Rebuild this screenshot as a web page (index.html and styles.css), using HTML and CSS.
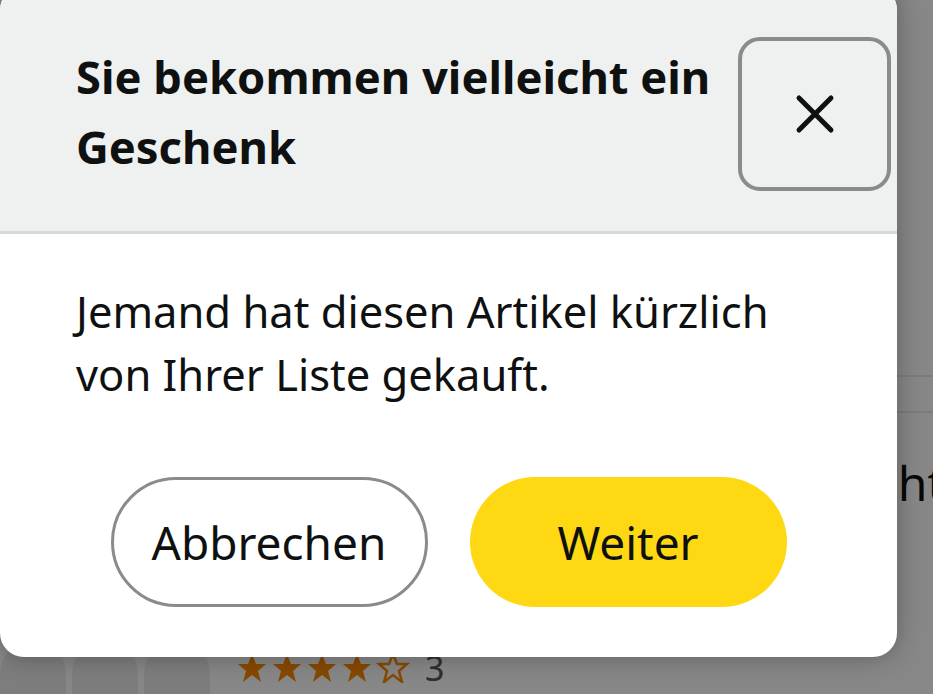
FILE: index.html
```html
<!DOCTYPE html>
<html lang="de">
<head>
    <meta charset="UTF-8">
    <meta name="viewport" content="width=device-width, initial-scale=1.0">
    <title>Geschenk Hinweis</title>
    <link rel="stylesheet" href="styles.css">
</head>
<body>
    <div class="page">
        <div class="page-top"></div>
        <div class="tabs"></div>
        <div class="product">
            <div class="product-image">
                <div class="bottle"></div>
                <div class="bottle"></div>
                <div class="bottle"></div>
            </div>
            <div class="product-info">
                <div class="product-title">Geschenkset Tee für Weihnachten Damen</div>
                <div class="product-title">und Herren mit Tasse ...</div>
                <div class="rating">
                    <svg class="stars" width="174" height="30" viewBox="0 0 174 30">
                        <defs>
                            <path id="star" d="M15 1 L19 11 L29 11 L21 18 L24 29 L15 22 L6 29 L9 18 L1 11 L11 11 Z"/>
                        </defs>
                        <use href="#star" x="0" fill="#ff8a00"/>
                        <use href="#star" x="35" fill="#ff8a00"/>
                        <use href="#star" x="70" fill="#ff8a00"/>
                        <use href="#star" x="105" fill="#ff8a00"/>
                        <use href="#star" x="141" fill="none" stroke="#ff8a00" stroke-width="2.5"/>
                    </svg>
                    <span class="count">3</span>
                </div>
            </div>
        </div>
    </div>

    <div class="backdrop"></div>

    <div class="modal" role="dialog">
        <div class="modal-header">
            <h2 class="modal-title">Sie bekommen vielleicht ein Geschenk</h2>
            <button class="close-btn" aria-label="Schließen">
                <svg width="40" height="40" viewBox="0 0 40 40">
                    <path d="M4 4 L36 36 M36 4 L4 36" stroke="#0f1111" stroke-width="5" stroke-linecap="round" fill="none"/>
                </svg>
            </button>
        </div>
        <div class="modal-body">
            <p class="modal-text">Jemand hat diesen Artikel kürzlich von Ihrer Liste gekauft.</p>
            <div class="actions">
                <button class="btn btn-cancel">Abbrechen</button>
                <button class="btn btn-primary">Weiter</button>
            </div>
        </div>
    </div>
</body>
</html>
```

FILE: styles.css
```css
* {
    box-sizing: border-box;
}

body {
    margin: 0;
    width: 933px;
    height: 694px;
    overflow: hidden;
    position: relative;
    font-family: "Noto Sans", "Open Sans", sans-serif;
    color: #0f1111;
    background: #fff;
}

/* page behind the dialog */
.page {
    height: 694px;
    overflow: hidden;
}

.page-top {
    height: 375px;
}

.tabs {
    height: 38px;
    border-top: 2px solid #eaeaea;
    border-bottom: 2px solid #eaeaea;
}

.product {
    display: flex;
    gap: 27px;
}

.product-image {
    width: 210px;
    height: 300px;
    display: flex;
    gap: 6px;
    padding-top: 230px;
}

.bottle {
    flex: 1;
    background: #ececec;
    border-radius: 30px 30px 0 0;
}

.product-info {
    padding-top: 36px;
    flex: 1;
    min-width: 0;
}

.product-title {
    font-size: 48px;
    line-height: 68px;
    white-space: nowrap;
}

.rating {
    display: flex;
    align-items: center;
    gap: 14px;
    margin-top: 68px;
}

.stars {
    display: block;
}

.count {
    font-size: 34px;
    color: #565959;
    line-height: 30px;
}

.backdrop {
    position: absolute;
    inset: 0;
    background: rgba(0, 0, 0, 0.47);
}

/* dialog */
.modal {
    position: absolute;
    left: 0;
    top: -14px;
    width: 897px;
    background: #fff;
    border-radius: 24px;
    overflow: hidden;
    box-shadow: 0 0 24px rgba(0, 0, 0, 0.3);
}

.modal-header {
    display: flex;
    justify-content: space-between;
    align-items: flex-start;
    background: #eff0f0;
    border-bottom: 3px solid #d5d9d9;
    padding: 51px 6px 40px 76px;
}

.modal-title {
    margin: 5px 0 0;
    max-width: 650px;
    font-size: 45.3px;
    line-height: 70px;
    font-weight: 700;
}

.close-btn {
    width: 153px;
    height: 154px;
    border: 4px solid #888c8c;
    border-radius: 22px;
    background: #eff0f0;
    display: flex;
    align-items: center;
    justify-content: center;
    padding: 0;
}

.modal-body {
    padding: 46px 76px 50px;
}

.modal-text {
    margin: 0;
    font-size: 43.5px;
    line-height: 63px;
}

.actions {
    display: flex;
    justify-content: center;
    gap: 42px;
    margin-top: 71px;
}

.btn {
    width: 317px;
    height: 130px;
    border-radius: 65px;
    font-family: inherit;
    font-size: 46px;
    color: #0f1111;
    padding: 0;
}

.btn-cancel {
    background: #fff;
    border: 3px solid #888c8c;
}

.btn-primary {
    background: #ffd814;
    border: none;
}
```
